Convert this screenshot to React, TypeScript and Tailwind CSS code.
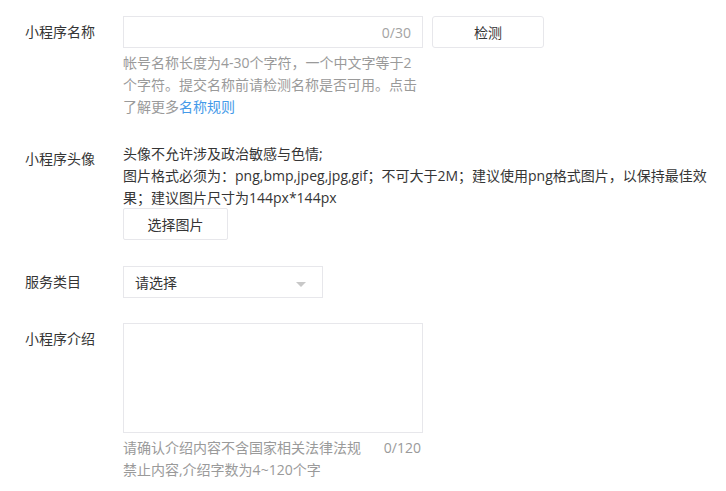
import React from "react";

const font = { fontFamily: '"Open Sans", "Noto Sans CJK SC", sans-serif' };

function Label({ children }: { children: React.ReactNode }) {
  return (
    <div className="w-[98px] shrink-0 text-[14px] leading-[32px] text-[#353535]">{children}</div>
  );
}

export default function App() {
  return (
    <div className="min-h-[491px] w-[726px] bg-white pl-[25px] pt-[16px] text-[14px]" style={font}>
      {/* Name */}
      <div className="flex">
        <Label>小程序名称</Label>
        <div>
          <div className="flex items-start gap-[9px]">
            <div className="flex h-[32px] w-[300px] items-center justify-end border border-[#e7e7eb] bg-white pr-[11px] text-[#a3a3a3]">
              0/30
            </div>
            <button className="h-[32px] w-[112px] rounded-[3px] border border-[#e7e7eb] bg-white text-[14px] text-[#353535]">
              检测
            </button>
          </div>
          <div className="mt-[4px] whitespace-nowrap text-[14px] leading-[22px] text-[#9a9a9a]">
            帐号名称长度为4-30个字符，一个中文字等于2
            <br />
            个字符。提交名称前请检测名称是否可用。点击
            <br />
            了解更多<span className="text-[#459ae9]">名称规则</span>
          </div>
        </div>
      </div>

      {/* Avatar */}
      <div className="mt-[25px] flex">
        <Label>小程序头像</Label>
        <div>
          <div className="whitespace-nowrap text-[14px] leading-[22px] text-[#353535]">
            头像不允许涉及政治敏感与色情;
            <br />
            图片格式必须为：png,bmp,jpeg,jpg,gif；不可大于2M；建议使用png格式图片，以保持最佳效
            <br />
            果；建议图片尺寸为144px*144px
          </div>
          <button className="mt-[-1px] h-[32px] w-[105px] rounded-[2px] border border-[#e7e7eb] bg-white text-[14px] text-[#353535]">
            选择图片
          </button>
        </div>
      </div>

      {/* Category */}
      <div className="mt-[26px] flex">
        <Label>服务类目</Label>
        <div className="relative flex h-[32px] w-[200px] items-center border border-[#e7e7eb] bg-white pl-[11px] text-[#353535]">
          请选择
          <svg className="absolute left-[172px] top-[15px]" width="10" height="6" viewBox="0 0 10 6">
            <path d="M0 0 L10 0 L5 5 Z" fill="#c8c8c8" />
          </svg>
        </div>
      </div>

      {/* Intro */}
      <div className="mt-[25px] flex">
        <Label>小程序介绍</Label>
        <div className="w-[300px]">
          <div className="h-[110px] w-[300px] border border-[#e7e7eb] bg-white" />
          <div className="mt-[4px] text-[14px] leading-[22px] text-[#9a9a9a]">
            <div className="flex justify-between pr-[2px]">
              <span>请确认介绍内容不含国家相关法律法规</span>
              <span>0/120</span>
            </div>
            <div>禁止内容,介绍字数为4~120个字</div>
          </div>
        </div>
      </div>
    </div>
  );
}
